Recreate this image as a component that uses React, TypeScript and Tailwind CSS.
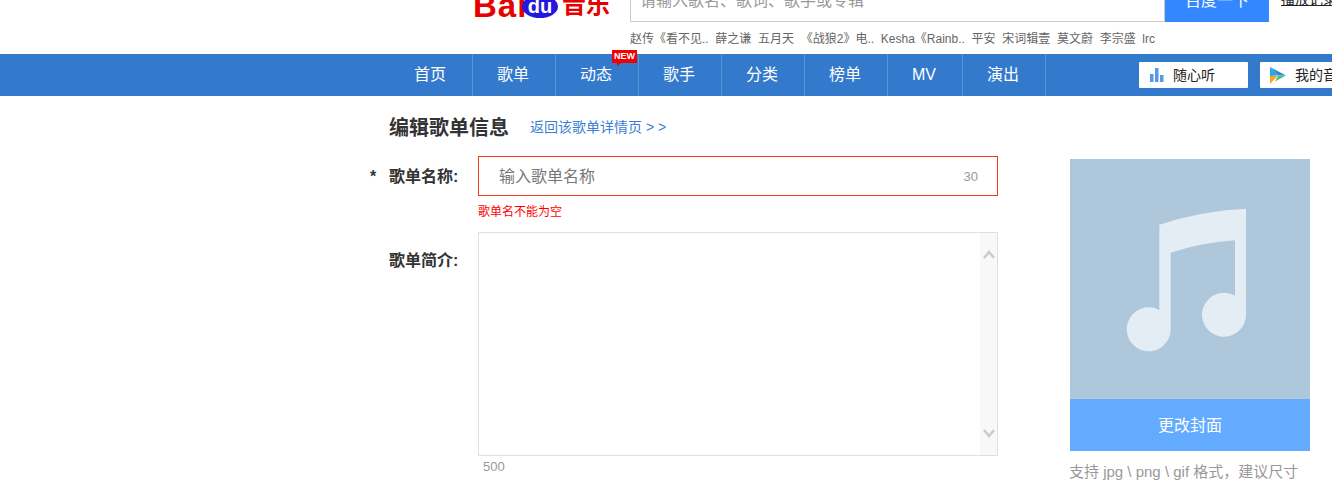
import React from 'react';

const FONT = 'font-["Liberation_Sans","Noto_Sans_CJK_SC",sans-serif]';

const NAV_ITEMS = [
  { label: '首页', width: 'w-[83px]' },
  { label: '歌单', width: 'w-[83px]' },
  { label: '动态', width: 'w-[83px]', isNew: true },
  { label: '歌手', width: 'w-[83px]' },
  { label: '分类', width: 'w-[83px]' },
  { label: '榜单', width: 'w-[83px]' },
  { label: 'MV', width: 'w-[75px]' },
  { label: '演出', width: 'w-[83px]' },
];

const HOT_WORDS = [
  '赵传《看不见..',
  '薛之谦',
  '五月天',
  '《战狼2》电..',
  'Kesha《Rainb..',
  '平安',
  '宋词辑壹',
  '莫文蔚',
  '李宗盛',
  'lrc',
];

export default function App() {
  return (
    <div className={`h-[485px] w-[1332px] overflow-hidden bg-white ${FONT}`}>
      <Header />
      <Nav />
      <EditForm />
    </div>
  );
}

function Header() {
  return (
    <div className="flex h-[54px] overflow-hidden pl-[474px]">
      {/* Logo, cut off by the top of the window */}
      <div className="-mt-[10px] flex h-[30px] w-[156px] shrink-0 items-center">
        <span className="-ml-px w-[49px] shrink-0 text-[33px] leading-none font-bold tracking-[1px] text-[#e60000]">Bai</span>
        <span className="flex h-[23px] w-[36px] shrink-0 translate-y-[1px] items-center justify-center rounded-[50%] bg-[#2319dc] text-[20px] leading-none font-bold text-white">
          du
        </span>
        <span className="ml-[4px] text-[24px] leading-none font-bold text-[#e60000]">音乐</span>
      </div>

      <div className="w-[639px] shrink-0">
        <div className="flex h-[22px]">
          <div className="-mt-[18px] flex h-[40px] w-[535px] items-center border border-[#cccccc] pb-[2px] pl-[9px] text-[16px] text-[#999999]">
            请输入歌名、歌词、歌手或专辑
          </div>
          <div className="-mt-[18px] flex h-[40px] w-[104px] items-center justify-center bg-[#3388ff] pb-[2px] text-[16px] text-white">
            百度一下
          </div>
        </div>
        <div className="mt-[10px] flex gap-[6.7px] text-[12px] leading-[14px] text-[#666666]">
          {HOT_WORDS.map((word) => (
            <span key={word}>{word}</span>
          ))}
        </div>
      </div>

      <div className="-mt-[11px] ml-[12px] text-[14px] leading-[20px] whitespace-nowrap text-[#222222] underline">
        播放记录
      </div>
    </div>
  );
}

function Nav() {
  return (
    <div className="flex h-[42px] items-center bg-[#337acc] pl-[390px]">
      {NAV_ITEMS.map((item) => (
        <div
          key={item.label}
          className={`relative flex h-full shrink-0 ${item.width} items-center justify-center border-r border-[#5b94d6] pr-[2px] text-[16px] text-white`}
        >
          {item.label}
          {item.isNew && <NewBadge />}
        </div>
      ))}

      <div className="ml-[93px] flex h-[26px] w-[109px] shrink-0 items-center rounded-[1px] bg-white pl-[11px] text-[14px] text-[#222222]">
        <svg width="14" height="14" viewBox="0 0 14 14" className="mr-[9px]">
          <rect x="0" y="6" width="3.5" height="8" fill="#559be0" />
          <rect x="5" y="0" width="3.5" height="14" fill="#559be0" />
          <rect x="10" y="7" width="3.5" height="7" fill="#559be0" />
        </svg>
        随心听
      </div>
      <div className="ml-[12px] flex h-[26px] w-[109px] shrink-0 items-center rounded-[1px] bg-white pl-[10px] text-[14px] whitespace-nowrap text-[#222222]">
        <svg width="16" height="17" viewBox="0 0 16 17" className="mr-[9px] shrink-0">
          <path d="M0 0 L16 8.5 L8 8.5 Z" fill="#2f86e6" />
          <path d="M0 0 L8 8.5 L0 9 Z" fill="#2aa6e8" />
          <path d="M0 9 L8 8.5 L0 17 Z" fill="#f5a623" />
          <path d="M8 8.5 L16 8.5 L5 14.5 Z" fill="#4cc38a" />
        </svg>
        我的音乐
      </div>
    </div>
  );
}

function NewBadge() {
  return (
    <span className="absolute top-[-4px] right-[1px] flex h-[13px] w-[25px] items-center justify-center bg-[#f00000] text-[9px] leading-none font-bold text-white">
      NEW
      <span className="absolute top-[13px] left-[5px] h-0 w-0 border-t-[3px] border-r-[4px] border-t-[#f00000] border-r-transparent" />
    </span>
  );
}

function EditForm() {
  return (
    <div className="flex pl-[370px]">
      <div className="w-[628px] shrink-0">
        <div className="flex h-[60px] items-center pt-[3px] pl-[19px]">
          <h1 className="text-[20px] font-bold text-[#333333]">编辑歌单信息</h1>
          <a className="ml-[21px] text-[14px] text-[#3a7fd5]">返回该歌单详情页 &gt; &gt;</a>
        </div>

        <div className="flex">
          <div className="flex h-[40px] w-[108px] shrink-0 items-center pt-[2px] text-[16px] font-bold text-[#333333]">
            <span className="w-[19px] text-[16px]">*</span>
            歌单名称:
          </div>
          <div className="flex h-[40px] w-[520px] items-center justify-between border border-[#f03c1e] pt-[2px] pr-[19px] pl-[20px]">
            <span className="text-[16px] text-[#777777]">输入歌单名称</span>
            <span className="text-[13px] text-[#999999]">30</span>
          </div>
        </div>

        <div className="mt-[8px] ml-[108px] text-[12px] leading-[16px] text-[#ff0000]">歌单名不能为空</div>

        <div className="mt-[12px] flex">
          <div className="w-[108px] shrink-0 pt-[17px] pl-[19px] text-[16px] leading-[24px] font-bold text-[#333333]">歌单简介:</div>
          <div className="flex h-[224px] w-[520px] justify-end border border-[#e0e0e0]">
            <div className="flex w-[17px] flex-col items-center justify-between bg-[#f8f8f8] pt-[17px] pb-[17px]">
              <svg width="12" height="9" viewBox="0 0 12 9" fill="none" stroke="#c5cdc8" strokeWidth="2.5">
                <path d="M1 8 L6 2 L11 8" />
              </svg>
              <svg width="12" height="9" viewBox="0 0 12 9" fill="none" stroke="#c5cdc8" strokeWidth="2.5">
                <path d="M1 1 L6 7 L11 1" />
              </svg>
            </div>
          </div>
        </div>

        <div className="mt-[3px] ml-[113px] text-[13px] leading-[16px] text-[#999999]">500</div>
      </div>

      <div className="ml-[72px] w-[240px] shrink-0 pt-[63px]">
        <div className="flex h-[240px] w-[240px] bg-[#aec7da]">
          <svg width="240" height="240" viewBox="0 0 240 240">
            <path
              d="M89.3 65.7 Q130 52 176 49.7 V155.7 A22 22 0 1 1 165 136.7 V81.3 Q130 84 100.7 93.7 V170 A22 22 0 1 1 89.3 151 Z"
              fill="#e4ecf4"
            />
          </svg>
        </div>
        <div className="flex h-[52px] items-center justify-center bg-[#62abff] pt-[1px] text-[16px] text-white">更改封面</div>
        <div className="mt-[11px] -ml-[1px] text-[15px] leading-[20px] whitespace-nowrap text-[#999999]">
          支持 jpg \ png \ gif 格式，建议尺寸
        </div>
      </div>
    </div>
  );
}
